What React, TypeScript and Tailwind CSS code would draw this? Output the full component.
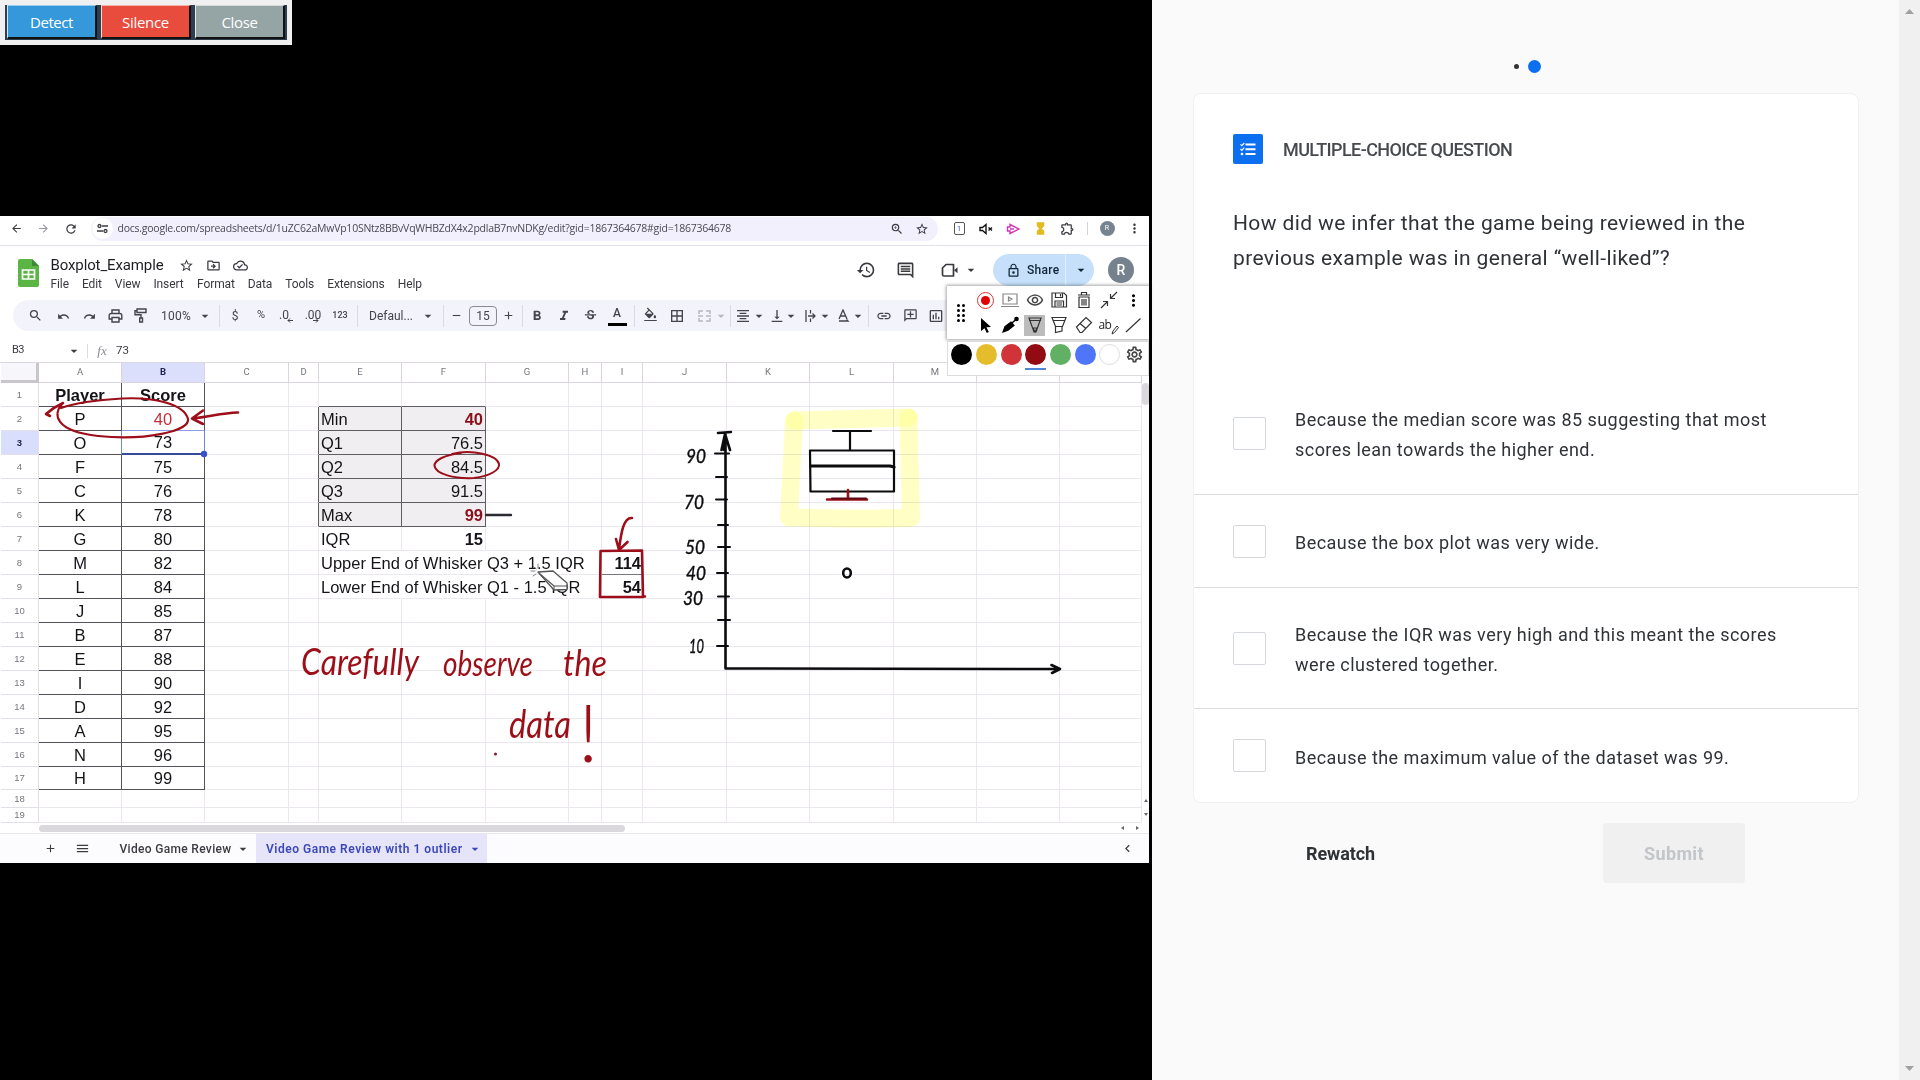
import type { ReactNode } from "react";
import {
  MdAdd, MdArrowBack, MdArrowDropDown, MdArrowForward, MdBorderAll, MdChevronLeft, MdFormatAlignCenter,
  MdFormatBold, MdFormatColorFill, MdFormatItalic, MdHistory, MdHourglassFull, MdInsertChartOutlined,
  MdLink, MdLockOutline, MdMenu, MdMoreVert, MdOutlineAddComment, MdOutlineCloudDone, MdOutlineComment,
  MdOutlineDriveFileMove, MdOutlineExtension, MdOutlineSettings, MdOutlineRemoveRedEye,
  MdRedo, MdRefresh, MdRemove, MdSearch, MdStarBorder, MdStrikethroughS, MdUndo,
  MdVerticalAlignBottom, MdZoomIn,
} from "react-icons/md";

/** Zero-width flex item whose content is centred on its own position. */
function Slot({ className, children }: { className: string; children: ReactNode }) {
  return <div className={`flex w-0 shrink-0 items-center justify-center whitespace-nowrap ${className}`}>{children}</div>;
}

const Icon = ({ children }: { children: ReactNode }) => <span className="shrink-0">{children}</span>;
const Caret = ({ size = 16 }: { size?: number }) => <MdArrowDropDown size={size} className="shrink-0" />;
const Sep = () => <span className="h-[22px] w-px shrink-0 bg-[#dcdae4]" />;

/* ---------- control strip ---------- */
function ControlStrip() {
  const base = "flex h-[34px] w-[90px] items-center justify-center border border-r-2 border-b-2 pt-[2px] text-[15px] text-white";
  return (
    <div className="absolute top-0 left-0 flex h-[45px] w-[292px] bg-[#f0f0f0] pt-[5px] pl-[5px] font-['Open_Sans',sans-serif]">
      <div className="flex h-[35px] w-[282px] gap-[4px] bg-[#2c3e50] pl-[2px]">
        <div className={`${base} border-t-[#9bcdee] border-r-[#111] border-b-[#111] border-l-[#d3e9f8] bg-[#3498db] tracking-[-0.43px]`}>Detect</div>
        <div className={`${base} border-t-[#f5b0a8] border-r-[#111] border-b-[#111] border-l-[#f9d5d0] bg-[#e74c3c] tracking-[-0.29px]`}>Silence</div>
        <div className={`${base} border-t-[#d5dcdc] border-r-[#111] border-b-[#111] border-l-[#e8ecec] bg-[#95a5a6] tracking-[-0.37px]`}>Close</div>
      </div>
    </div>
  );
}

/* ---------- browser bar ---------- */
function BrowserBar() {
  return (
    <div className="flex h-[30px] items-center border-b border-[#e4dfe8] pb-[4px] text-[#3d3b42]">
      <Slot className="ml-[16px]"><Icon><MdArrowBack size={13} /></Icon></Slot>
      <Slot className="ml-[27px] text-[#99979e]"><Icon><MdArrowForward size={13} /></Icon></Slot>
      <Slot className="ml-[28px]"><Icon><MdRefresh size={14} /></Icon></Slot>
      <div className="ml-[20px] flex h-[24px] w-[847px] items-center rounded-full bg-[#f2f0fc] pl-px">
        <div className="flex size-[21px] items-center justify-center rounded-full bg-white">
          <svg width="11" height="11" viewBox="0 0 11 11" fill="none" stroke="currentColor" strokeWidth="1.3">
            <circle cx="2.5" cy="3" r="1.5" /><path d="M5 3h6M0 8h6" /><circle cx="8.500" cy="8" r="1.5" />
          </svg>
        </div>
        <span className="ml-[4.5px] pt-px font-['Open_Sans',sans-serif] text-[10.5px] tracking-[-0.24px] whitespace-nowrap text-[#4b4952]">
          docs.google.com/spreadsheets/d/1uZC62aMwVp10SNtz8BBvVqWHBZdX4x2pdlaB7nvNDKg/edit?gid=1867364678#gid=1867364678
        </span>
        <div className="ml-auto flex items-center gap-[11px] pr-[9px]">
          <MdZoomIn size={14} /><MdStarBorder size={14} />
        </div>
      </div>
      <Slot className="ml-[21px]">
        <span className="flex h-[13px] w-[11px] shrink-0 items-center justify-center rounded-[2px] border border-[#555] text-[8px] text-[#4355c8]">1</span>
      </Slot>
      <Slot className="ml-[27px]">
        <svg width="14" height="12" viewBox="0 0 14 12" className="shrink-0" fill="none" stroke="#111" strokeWidth="1.400"><path d="M1 4.500h2.500L7 1.500v9L3.500 7.500H1zM9.500 4.500l3.500 3M13 4.500l-3.500 3" /></svg>
      </Slot>
      <Slot className="ml-[27px]">
        <svg width="14" height="12" viewBox="0 0 14 12" className="shrink-0" fill="none" stroke="#d436b8" strokeWidth="1.4"><path d="M4 1.500l9 4.500-9 4.500V8H1.500V4H4zM4 6h4" /></svg>
      </Slot>
      <Slot className="ml-[27px] text-[#e0bb1e]"><Icon><MdHourglassFull size={15} /></Icon></Slot>
      <Slot className="ml-[27px]"><Icon><MdOutlineExtension size={15} /></Icon></Slot>
      <Slot className="ml-[20px]"><span className="h-[13px] w-px shrink-0 bg-[#d9cdf0]" /></Slot>
      <Slot className="ml-[20px]"><span className="flex size-[15px] shrink-0 items-center justify-center rounded-full bg-[#768490] text-[7px] text-white">R</span></Slot>
      <Slot className="ml-[27px]"><Icon><MdMoreVert size={15} /></Icon></Slot>
    </div>
  );
}

/* ---------- document header ---------- */
function DocHeader() {
  return (
    <div className="flex h-[54px] text-[#3a383f]">
      <svg width="21" height="28" viewBox="0 0 21 28" className="mt-[13px] ml-[18px] shrink-0">
        <path d="M2 0h12l7 7v19a2 2 0 0 1-2 2H2a2 2 0 0 1-2-2V2a2 2 0 0 1 2-2z" fill="#5bb545" />
        <path d="M14 0l7 7h-7z" fill="#3c8a35" />
        <path d="M4.500 11h12v9h-12zM4.500 15.500h12M10.500 11v9" fill="none" stroke="#fff" strokeWidth="1.700" />
      </svg>
      <div className="ml-[11.5px] flex w-[400px] flex-col pt-[9px]">
        <div className="flex h-[20px] items-center">
          <span className="text-[15px] tracking-[-0.12px] text-[#1f1d22]">Boxplot_Example</span>
          <MdStarBorder size={15} className="ml-[15px]" />
          <MdOutlineDriveFileMove size={15} className="ml-[12px]" />
          <MdOutlineCloudDone size={15} className="ml-[12px]" />
        </div>
        <div className="flex h-[17px] items-center text-[12px] tracking-[-0.1px]">
          <span>File</span><span className="ml-[13px]">Edit</span><span className="ml-[13px]">View</span>
          <span className="ml-[13px]">Insert</span><span className="ml-[13.5px]">Format</span><span className="ml-[13px]">Data</span>
          <span className="ml-[13px]">Tools</span><span className="ml-[13px]">Extensions</span><span className="ml-[13px]">Help</span>
        </div>
      </div>
      <div className="mt-[8px] ml-auto flex h-[32px] items-center pr-[15px]">
        <MdHistory size={20} />
        <MdOutlineComment size={19} className="ml-[20px]" />
        <svg width="18" height="15" viewBox="0 0 18 15" className="ml-[26px]" fill="none" stroke="currentColor" strokeWidth="1.700">
          <path d="M5 1.500h7.500v11.500H3a1.500 1.500 0 0 1-1.500-1.500V5z" strokeLinejoin="round" /><path d="M13 7.300l3.500-3v6z" fill="currentColor" stroke="none" />
        </svg>
        <MdArrowDropDown size={16} className="ml-[4px]" />
        <div className="ml-[14px] flex h-[32px] w-[101px] items-center rounded-full bg-[#c6e0fb] text-[#0f2437]">
          <MdLockOutline size={15} className="ml-[13px]" />
          <span className="ml-[6px] text-[12px] font-medium tracking-[0.3px]">Share</span>
          <span className="ml-[6px] h-full w-px bg-[#e2f0fd]" />
          <MdArrowDropDown size={16} className="ml-[7px]" />
        </div>
        <div className="ml-[14px] flex size-[26px] items-center justify-center rounded-full bg-[#75828d] text-[14px] font-medium text-white">R</div>
      </div>
    </div>
  );
}

/* ---------- formatting toolbar ---------- */
function FormatBar() {
  return (
    <div className="ml-[13px] flex h-[31px] w-[1124px] items-center rounded-full bg-[#f3f3fb] text-[12px] text-[#45434b]">
      <Slot className="ml-[22px]"><Icon><MdSearch size={15} /></Icon></Slot>
      <Slot className="ml-[28px] pt-[2px]"><Icon><MdUndo size={13} /></Icon></Slot>
      <Slot className="ml-[26px] pt-[2px]"><Icon><MdRedo size={13} /></Icon></Slot>
      <Slot className="ml-[26px]">
        <svg width="15" height="14" viewBox="0 0 15 14" className="shrink-0" fill="none" stroke="currentColor" strokeWidth="1.400"><path d="M4 4.500V1h7v3.500M3.500 10H1.200V6.500a2 2 0 0 1 2-2h8.600a2 2 0 0 1 2 2V10h-2.300M4 8.500h7V13H4z" /></svg>
      </Slot>
      <Slot className="ml-[25px]">
        <svg width="13" height="15" viewBox="0 0 13 15" className="shrink-0" fill="none" stroke="currentColor" strokeWidth="1.400"><path d="M3 1h9v3.500H3zM3 2.700H1v4h6v3M5.700 10h2.800v4H5.700z" /></svg>
      </Slot>
      <Slot className="ml-[36px] tracking-[0.2px]">100%</Slot>
      <Slot className="ml-[29px]"><Caret /></Slot>
      <Slot className="ml-[14px]"><Sep /></Slot>
      <Slot className="ml-[16px]">$</Slot>
      <Slot className="ml-[26px] text-[11px]">%</Slot>
      <Slot className="ml-[23px] pb-[2px]"><span className="text-[12px]">.0</span></Slot>
      <Slot className="ml-[6px] pt-[9px]"><svg width="6" height="5" viewBox="0 0 6 5" className="shrink-0" fill="none" stroke="currentColor"><path d="M6 2.500H1M3 .5l-2 2 2 2" /></svg></Slot>
      <Slot className="ml-[23px] pb-[2px]"><span className="text-[12px]">.00</span></Slot>
      <Slot className="ml-[3px] pt-[9px]"><svg width="6" height="5" viewBox="0 0 6 5" className="shrink-0" fill="none" stroke="currentColor"><path d="M0 2.500h5M3 .5l2 2-2 2" /></svg></Slot>
      <Slot className="ml-[24px] text-[9px] font-medium">123</Slot>
      <Slot className="ml-[17px]"><Sep /></Slot>
      <Slot className="ml-[34px]">Defaul...</Slot>
      <Slot className="ml-[37px]"><Caret /></Slot>
      <Slot className="ml-[15px]"><Sep /></Slot>
      <Slot className="ml-[13px]"><Icon><MdRemove size={13} /></Icon></Slot>
      <Slot className="ml-[27px]"><span className="flex h-[20px] w-[28px] shrink-0 items-center justify-center rounded-[4px] border border-[#8b8992]">15</span></Slot>
      <Slot className="ml-[25px]"><Icon><MdAdd size={13} /></Icon></Slot>
      <Slot className="ml-[14px]"><Sep /></Slot>
      <Slot className="ml-[15px]"><Icon><MdFormatBold size={16} /></Icon></Slot>
      <Slot className="ml-[27px]"><Icon><MdFormatItalic size={16} /></Icon></Slot>
      <Slot className="ml-[26px]"><Icon><MdStrikethroughS size={15} /></Icon></Slot>
      <Slot className="ml-[27px]">
        <span className="flex h-[20px] w-[19px] shrink-0 flex-col items-center justify-between border-b-[3px] border-black pb-[3px] text-[12px] leading-[14px] font-medium">A</span>
      </Slot>
      <Slot className="ml-[17px]"><Sep /></Slot>
      <Slot className="ml-[16px] pb-[4px]"><Icon><MdFormatColorFill size={15} viewBox="0 0 24 19" /></Icon></Slot>
      <Slot className="ml-[27px]"><Icon><MdBorderAll size={16} /></Icon></Slot>
      <Slot className="ml-[27px] text-[#b9b7c0]">
        <svg width="13" height="12" viewBox="0 0 13 12" className="shrink-0" fill="none" stroke="currentColor" strokeWidth="1.500"><path d="M5 1H1v3M5 11H1V8M8 1h4v3M8 11h4V8M0 6h5M8 6h5" /></svg>
      </Slot>
      <Slot className="ml-[17px] text-[#b9b7c0]"><Caret /></Slot>
      <Slot className="ml-[9px]"><Sep /></Slot>
      <Slot className="ml-[13px]"><Icon><MdFormatAlignCenter size={16} /></Icon></Slot>
      <Slot className="ml-[16px]"><Caret /></Slot>
      <Slot className="ml-[18px]"><Icon><MdVerticalAlignBottom size={16} /></Icon></Slot>
      <Slot className="ml-[14px]"><Caret /></Slot>
      <Slot className="ml-[19px]">
        <svg width="11" height="12" viewBox="0 0 11 12" className="shrink-0" fill="none" stroke="currentColor" strokeWidth="1.300"><path d="M1 0v12M5.500 0v3.500M5.500 8.500V12M3 6h6.500M7.500 3.500L10 6 7.500 8.500" /></svg>
      </Slot>
      <Slot className="ml-[15px]"><Caret /></Slot>
      <Slot className="ml-[19px]">
        <svg width="12" height="13" viewBox="0 0 12 13" className="shrink-0" fill="none" stroke="currentColor" strokeWidth="1.300"><path d="M1 10L5 1l4 9M2.500 7h5M1 12h9l-1.500-1.500" /></svg>
      </Slot>
      <Slot className="ml-[14px]"><Caret /></Slot>
      <Slot className="ml-[10px]"><Sep /></Slot>
      <Slot className="ml-[16px]"><Icon><MdLink size={16} /></Icon></Slot>
      <Slot className="ml-[26px]"><Icon><MdOutlineAddComment size={15} className="-scale-x-100" /></Icon></Slot>
      <Slot className="ml-[26px]"><Icon><MdInsertChartOutlined size={16} /></Icon></Slot>
    </div>
  );
}

function FormulaBar() {
  return (
    <div className="flex h-[31px] items-center pt-[8px] text-[11.5px] text-[#3d3b42]">
      <span className="ml-[12px] w-[53px] text-[11px] tracking-[-0.5px]">B3</span>
      <Slot className="ml-[9px]"><Caret /></Slot>
      <Slot className="ml-[13px]"><span className="h-[14px] w-px shrink-0 bg-[#dcd9e2]" /></Slot>
      <Slot className="ml-[15px] font-['Liberation_Serif',serif] text-[13px] text-[#8d8b93] italic">fx</Slot>
      <span className="ml-[14px]">73</span>
    </div>
  );
}

/* ---------- sheet ---------- */
const COLS = "grid grid-cols-[38px_83px_83px_84px_30px_83px_84px_83px_33px_41px_84px_83px_84px_83px_83px_82px]";
const LETTERS = ["A", "B", "C", "D", "E", "F", "G", "H", "I", "J", "K", "L", "M", "N", ""];
const PLAYERS: [string, string][] = [
  ["Player", "Score"], ["P", "40"], ["O", "73"], ["F", "75"], ["C", "76"], ["K", "78"], ["G", "80"], ["M", "82"], ["L", "84"],
  ["J", "85"], ["B", "87"], ["E", "88"], ["I", "90"], ["D", "92"], ["A", "95"], ["N", "96"], ["H", "99"],
];
const STATS: Record<number, [string, string]> = {
  2: ["Min", "40"], 3: ["Q1", "76.5"], 4: ["Q2", "84.5"], 5: ["Q3", "91.5"], 6: ["Max", "99"], 7: ["IQR", "15"],
  8: ["Upper End of Whisker Q3 + 1.5 IQR", ""], 9: ["Lower End of Whisker Q1 - 1.5 IQR", ""],
};
const WHISKER: Record<number, string> = { 8: "114", 9: "54" };

function cellClass(row: number, col: string) {
  let c = "flex min-w-0 items-center overflow-visible whitespace-nowrap border-r border-b pt-px ";
  if ((col === "A" || col === "B") && row <= 17) {
    c += "justify-center " + (row === 1 ? "font-bold " : "");
    if (row === 2 && col === "B") return c + "border-r-[#55525a] border-b-[#8c9bea] text-[#c0303a] ";
    if (row === 3 && col === "A") return c + "border-r-[#6f86e8] border-b-[#55525a] ";
    if (row === 3 && col === "B") return c + "border-r-[#6f86e8] border-b-2 border-b-[#3a4a9a] ";
    return c + "border-[#55525a] ";
  }
  if ((col === "E" || col === "F") && row >= 2 && row <= 6) {
    c += "border-[#5f5c64] bg-[#f0eef1] ";
    if (col === "F") c += "justify-end pr-[2px] " + (row === 2 || row === 6 ? "font-bold text-[#8a0f1a] " : "");
    return c + (col === "E" ? "pl-[2px] " : "");
  }
  if (col === "D" && row >= 2 && row <= 6) return c + "border-r-[#5f5c64] border-b-[#ece7ef] ";
  if ((col === "E" || col === "F") && row === 1) return c + "border-r-[#ece7ef] border-b-[#5f5c64] ";
  if (col === "I" && row === 8) return c + "justify-end border-r-[#ece7ef] border-b-[#77747c] pr-px font-bold ";
  if (col === "I" && row === 9) return c + "justify-end border-[#ece7ef] pr-px font-bold ";
  if ("EFG".includes(col) && (row === 8 || row === 9)) return c + "border-r-transparent border-b-[#ece7ef] pl-[2px] ";
  if (col === "E") c += "pl-[2px] ";
  if (col === "F") c += "justify-end pr-[2px] font-bold ";
  return c + "border-[#ece7ef] ";
}

function cellText(row: number, col: string) {
  if (col === "A") return PLAYERS[row - 1]?.[0];
  if (col === "B") return PLAYERS[row - 1]?.[1];
  if (col === "E") return STATS[row]?.[0];
  if (col === "F") return STATS[row]?.[1];
  if (col === "I") return WHISKER[row];
  return null;
}

function Sheet() {
  return (
    <div className="h-[472px] w-[1142px]">
      <div className={`${COLS} h-[21px] border-t border-[#dcd7e0] pl-px text-[9.5px] text-[#77757d]`}>
        <div className="border-r-[3px] border-b-[3px] border-[#c8c5cc] bg-[#f7f6fb]" />
        {LETTERS.map((l, i) => (
          <div key={i} className={`flex items-center justify-center border-r border-b border-[#d9d4dd] ${l === "B" ? "bg-[#dcdffb] font-bold text-[#22244e]" : ""}`}>{l}</div>
        ))}
      </div>
      {Array.from({ length: 19 }, (_, i) => i + 1).map((row) => (
        <div key={row} className={`${COLS} pl-px font-['Liberation_Sans',sans-serif] text-[16.5px] leading-none text-[#151318] ${row === 19 ? "h-[15px]" : row === 18 ? "h-[18px]" : row === 17 ? "h-[23px]" : "h-[24px]"}`}>
          <div className={`flex items-center justify-center border-r border-b border-[#e4dfe7] text-[9.5px] ${row === 3 ? "bg-[#d9defc] font-bold text-[#22244e]" : "text-[#77757d]"}`}>{row}</div>
          {LETTERS.map((l, i) => (
            <div key={i} className={cellClass(row, l || "Z")}>{cellText(row, l || "Z")}</div>
          ))}
        </div>
      ))}
      <div className="flex h-[11px] items-center border-b border-[#e9e5ec]">
        <div className="ml-[39px] h-[7px] w-[586px] rounded-full bg-[#dad8dd]" />
        <div className="ml-auto flex items-center gap-[10px] pr-[3px]">
          <svg width="4" height="4" viewBox="0 0 4 4"><path d="M3 0v4L0 2z" fill="#66646c" /></svg>
          <svg width="4" height="4" viewBox="0 0 4 4"><path d="M1 0v4l3-2z" fill="#66646c" /></svg>
        </div>
      </div>
    </div>
  );
}

function SheetTabs() {
  return (
    <div className="flex h-[29px] items-center bg-[#fcfcff] text-[12px] font-medium text-[#3d3b42]">
      <Slot className="ml-[50px]"><Icon><MdAdd size={13} /></Icon></Slot>
      <Slot className="ml-[32px]"><Icon><MdMenu size={15} /></Icon></Slot>
      <span className="ml-[37.5px] tracking-[0.32px]">Video Game Review</span>
      <Slot className="ml-[11.5px]"><Caret /></Slot>
      <div className="ml-[13px] flex h-full w-[231px] items-center bg-[#e5e4f8] pl-[10px] font-semibold text-[#3c48ba]">
        <span className="tracking-[0.52px] whitespace-nowrap">Video Game Review with 1 outlier</span>
        <Slot className="ml-[12px]"><Caret /></Slot>
      </div>
      <MdChevronLeft size={15} className="mr-[14px] ml-auto" />
    </div>
  );
}

/* ---------- pen palette floating over the sheet ---------- */
const SWATCHES = ["bg-black", "bg-[#e5bd2c]", "bg-[#d03438]", "bg-[#920b12]", "bg-[#61b064]", "bg-[#4f76f8]", "bg-white border border-[#ddd]"];

function PenPalette() {
  const s = { width: 20, height: 20, viewBox: "0 0 20 20", fill: "none", stroke: "#333", strokeWidth: 1.2 };
  return (
    <div className="absolute top-[286px] left-[947px] w-[202px]">
      <div className="flex h-[53px] items-center bg-white shadow-[0_0_3px_1px_rgba(0,0,0,0.35)]">
        <div className="ml-[10px] grid grid-cols-2 gap-[2px]">
          {Array.from({ length: 8 }, (_, i) => <span key={i} className="size-[3px] rounded-full bg-black" />)}
        </div>
        <div className="ml-[8px] grid grid-cols-[repeat(7,24.7px)] grid-rows-[25px_25px] place-items-center">
          <span className="flex size-[17px] items-center justify-center rounded-full border border-[#d33]"><span className="size-[9px] rounded-full bg-[#e00000]" /></span>
          <svg {...s} stroke="#888"><path d="M3 4h14v10H3zM1 16.500h18M8.500 7v4l3.500-2z" /></svg>
          <MdOutlineRemoveRedEye size={18} color="#444" />
          <svg {...s}><path d="M3 3h12l2.500 2.500V17H3zM6.500 3v4.500h7V3M11.500 4v2.500M6 17v-6h8.500v6M7.500 13h5.500M7.500 15h5.500" /></svg>
          <svg {...s}><path d="M4 5h12M7.500 5V2.500h5V5M5 7h10v10.500H5zM8 9v6.500M10 9v6.500M12 9v6.500" /></svg>
          <svg {...s}><path d="M18 2l-6.500 6.500M11.500 4v4.500H16M2 18l6.500-6.500M8.500 16v-4.500H4" /></svg>
          <MdMoreVert size={19} color="#000" />
          <svg {...s} stroke="none" fill="#000"><path d="M6 3l10 9-4.500.3 2.300 4.700-2 1-2.300-4.800L6 16z" /></svg>
          <svg {...s} stroke="#000"><path d="M3 17l2-5.500L11 7l3 3.500-6 4.700z" fill="#000" /><path d="M12 8l4-3.500" strokeWidth="1.500" /><circle cx="16.500" cy="4" r="1.700" fill="#000" /></svg>
          <span className="flex size-[21px] items-center justify-center bg-[#bcbcbc]"><svg {...s}><path d="M4 3h12l-5 14H9zM4 5.500h12M8 13l2 4 2-4z" /></svg></span>
          <svg {...s}><path d="M3 2.500h14l-3.500 9h-7zM4 5.500h12M6.500 11.500V17.500l6.500-1.500v-4.500" /></svg>
          <svg {...s}><path d="M2.500 12L12 2.500l5.500 5-9.500 10H6zM6 8.500l6 5" /></svg>
          <span className="flex items-end font-['Open_Sans',sans-serif] text-[12px] leading-[20px] tracking-[-0.6px] text-[#222]">ab
            <svg width="8" height="10" viewBox="0 0 8 10" fill="none" stroke="#333"><path d="M1 9l1-3 4-5 1.500 1.500-4 5z" /></svg>
          </span>
          <svg {...s}><path d="M3 17L17.500 3.500" /></svg>
        </div>
      </div>
      <div className="mt-[2px] flex h-[35px] border border-[#ddd] bg-white pl-[1.500px]">
        {SWATCHES.map((c, i) => (
          <div key={i} className="flex w-[24.7px] flex-col items-center pt-[2px]">
            <span className={`size-[21px] rounded-full ${c}`} />
            {i === 3 && <span className="mt-[3px] h-[2px] w-[21px] bg-[#4f86d6]" />}
          </div>
        ))}
        <MdOutlineSettings size={19} color="#444" className="mt-[3px] ml-[3px]" />
      </div>
    </div>
  );
}

/* ---------- ink annotations ---------- */
function Ink() {
  const ticks: [number, number, number][] = [
    [715, 729, 453.5], [716, 727, 477], [716, 727, 499.5], [718, 728, 525], [718, 730, 547], [717, 728, 573], [718, 729, 596.5], [718, 730, 620], [717, 728, 646],
  ];
  const labels: [string, number, number][] = [["90", 686, 463], ["70", 684, 509], ["50", 685, 554], ["40", 686, 580], ["30", 683, 605], ["10", 689, 653]];
  return (
    <svg className="pointer-events-none absolute top-[216px] left-0" width="1149" height="647" viewBox="0 216 1149 647" fill="none" strokeLinecap="round" strokeLinejoin="round">
      <g stroke="#ffff8c" strokeOpacity="0.5" strokeWidth="18" className="mix-blend-multiply">
        <path d="M795 420.500L909 417.500" />
        <path d="M794 420.500L789 517.500Q850 519.500 911 518L908.500 418" />
      </g>
      <g stroke="#0c0c0e" strokeWidth="2.600">
        <path d="M725.500 433V668.500L1060 669M1051.500 665L1060 669L1052 673M718 433L731 432M721.500 450L725 434L730 450M724 440v10" />
        {ticks.map(([a, b, y]) => <path key={y} d={`M${a} ${y}H${b}`} strokeWidth="2" />)}
        <path d="M833 431H871M850 431V450M810 450.500H894V491.500H810.500Z" strokeWidth="2.200" />
        <path d="M811 466H890L894 467" strokeWidth="3.200" />
        <ellipse cx="847" cy="573" rx="3.800" ry="4.500" />
        <path d="M486 515H511" strokeWidth="2.400" stroke="#2a2a30" />
      </g>
      <g fill="#0c0c0e" stroke="#0c0c0e" strokeWidth="0.400" fontFamily="Lato, sans-serif" fontStyle="italic" fontSize="19">
        {labels.map(([t, x, y]) => <text key={t} x={x} y={y} textLength={t === "10" ? 15 : 20} lengthAdjust="spacingAndGlyphs">{t}</text>)}
      </g>
      <g stroke="#9c0f1a" strokeWidth="2.600">
        <path d="M827 499.500H867M848 490V498" />
        <path d="M832 498.500H866" stroke="#5a0a10" strokeWidth="2" />
        <path d="M46 414Q54 407 63 403M46 414L52 409.500M46 414L50 416" />
        <path d="M62 404C53 414 54 431 98 436C146 441 190 431 188 419C184 403 152 397 122 398.500C96 400 78 402 61 408" strokeWidth="2.200" />
        <path d="M238 412.500C220 413 210 417 192 418.500M203 410.500L192 418.500L203 424" />
        <path d="M461 453C445 455 434 460 434.500 466C436 474 454 479 474 478C490 476 500 470 499 464C497 455 472 449 452 454" strokeWidth="2" />
        <path d="M600.500 551L642 550.500L643 597L600 597ZM643 596.500h2" />
        <path d="M632 518C623 517 621 535 619 549M616 539L619 550L627.500 542" />
      </g>
      <circle cx="495.500" cy="754" r="1.500" fill="#8a1a30" />
      <path d="M538 572L553 571L567 583V589.500L554 590Z" fill="#fdfdfd" stroke="#555" strokeWidth="1.300" />
      <path d="M540 574L554 586H567M554 586V590" stroke="#555" strokeWidth="1.100" />
      <path d="M533 566l3 3M538 564v4M531 571h4M533 576l3-2" stroke="#777" strokeWidth="0.900" />
      <circle cx="204" cy="454" r="3.200" fill="#3a50c8" />
      <g fill="#9c0f18" fontFamily="Lato, sans-serif" fontStyle="italic">
        <text x="301" y="675" fontSize="36" textLength="118" lengthAdjust="spacingAndGlyphs">Carefully</text>
        <text x="443" y="676" fontSize="34" textLength="90" lengthAdjust="spacingAndGlyphs">observe</text>
        <text x="563" y="676" fontSize="36" textLength="44" lengthAdjust="spacingAndGlyphs">the</text>
        <text x="509" y="738" fontSize="38" textLength="62" lengthAdjust="spacingAndGlyphs">data</text>
        <text x="578" y="762" fontSize="80" fontWeight="300" fontStyle="normal">!</text>
      </g>
    </svg>
  );
}

/* ---------- quiz panel ---------- */
const OPTIONS: { lines: string[]; cls: string }[] = [
  { lines: ["Because the median score was 85 suggesting that most", "scores lean towards the higher end."], cls: "h-[122px]" },
  { lines: ["Because the box plot was very wide."], cls: "h-[93px] border-t" },
  { lines: ["Because the IQR was very high and this meant the scores", "were clustered together."], cls: "h-[121px] border-t" },
  { lines: ["Because the maximum value of the dataset was 99."], cls: "h-[94px] border-t" },
];

function QuizPanel() {
  return (
    <div className="flex min-w-0 flex-1 bg-[#fafafa] text-[#2f3237]">
      <div className="flex w-[747px] flex-col">
        <div className="flex h-[93px] items-center pt-[40px] pl-[362px]">
          <span className="size-[5px] rounded-full bg-[#333]" />
          <span className="ml-[9px] size-[13px] rounded-full bg-[#0c6ff0]" />
        </div>
        <div className="ml-[41px] flex h-[710px] w-[666px] flex-col rounded-[8px] border border-[#f0f0f0] bg-white">
          <div className="mt-[40px] ml-[39px] flex h-[30px] items-center">
            <div className="flex size-[30px] items-center justify-center rounded-[2px] bg-[#0c6ff0]">
              <svg width="16" height="14" viewBox="0 0 16 14" fill="none" stroke="#fff">
                <path d="M5.500 2.500H15.500M5.500 7.200H15.500M5.500 12H15.500" strokeWidth="1.900" />
                <path d="M.5 2.300l1.300 1.300L4.300 1M.5 7l1.300 1.300L4.300 5.700" strokeWidth="1.200" /><circle cx="2" cy="12" r="1.300" fill="#fff" stroke="none" />
              </svg>
            </div>
            <span className="ml-[20px] pt-px text-[18px] font-medium tracking-[-0.6px] text-[#46494e]">MULTIPLE-CHOICE QUESTION</span>
          </div>
          <p className="mt-[42px] ml-[39px] text-[21px] leading-[35px] tracking-[0.38px] whitespace-nowrap">
            How did we infer that the game being reviewed in the<br />previous example was in general “well-liked”?
          </p>
          <div className="mt-auto">
            {OPTIONS.map((o) => (
              <div key={o.lines[0]} className={`flex items-center border-[#d9dde0] pl-[39px] ${o.cls}`}>
                <span className="size-[33px] shrink-0 rounded-[2px] border border-[#d5d9dd] bg-white" />
                <div className="ml-[29px] pt-[4px] text-[18px] leading-[30px] tracking-[0.46px] whitespace-nowrap">
                  {o.lines.map((l) => <div key={l}>{l}</div>)}
                </div>
              </div>
            ))}
          </div>
        </div>
        <div className="mt-[20px] flex h-[60px] items-center text-[18px]">
          <span className="ml-[154px] font-bold tracking-[-0.1px]">Rewatch</span>
          <span className="ml-[228px] flex h-full w-[142px] items-center justify-center rounded-[4px] bg-[#f0f0f0] font-bold tracking-[0.38px] text-[#c2c6ca]">Submit</span>
        </div>
      </div>
      <div className="flex w-[21px] flex-col items-center justify-between bg-[#f0f0f0] py-[9px]">
        <svg width="9" height="5" viewBox="0 0 9 5"><path d="M4.500 0L9 5H0z" fill="#a0a0a0" /></svg>
        <svg width="9" height="5" viewBox="0 0 9 5"><path d="M4.500 5L9 0H0z" fill="#a0a0a0" /></svg>
      </div>
    </div>
  );
}

export default function App() {
  return (
    <div className="relative flex h-[1080px] w-[1920px] overflow-hidden bg-black font-['Roboto',sans-serif]">
      <div className="flex w-[1152px] shrink-0 flex-col pt-[216px]">
        <div className="flex h-[647px] w-[1149px] flex-col overflow-hidden bg-white">
          <BrowserBar />
          <DocHeader />
          <FormatBar />
          <FormulaBar />
          <div className="flex">
            <Sheet />
            <div className="flex flex-1 flex-col items-center border-b border-[#e9e5ec] pt-[21px]">
              <span className="h-[22px] w-[7px] rounded-full bg-[#dad8dd]" />
              <span className="mt-auto mb-[17px] flex flex-col gap-[9px]">
                <svg width="4" height="4" viewBox="0 0 4 4"><path d="M0 3h4L2 0z" fill="#66646c" /></svg>
                <svg width="4" height="4" viewBox="0 0 4 4"><path d="M0 1h4L2 4z" fill="#66646c" /></svg>
              </span>
            </div>
          </div>
          <SheetTabs />
        </div>
      </div>
      <QuizPanel />
      <Ink />
      <PenPalette />
      <ControlStrip />
    </div>
  );
}
